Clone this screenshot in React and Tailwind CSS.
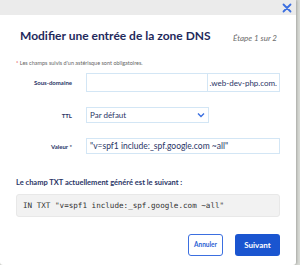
import React from 'react';

export default function App() {
    return (
        <div className="w-[300px] h-[265px] bg-[#d9dbd6] overflow-hidden font-['Lato',sans-serif] flex">
            <div className="w-[296px] flex flex-col bg-white shadow-[1px_0_3px_rgba(0,0,0,0.25)] rounded-b-[3px]">
                {/* barre du haut */}
                <div className="h-[15px] bg-[#ebebeb] flex items-center justify-end pr-[4px]">
                    <svg width="10" height="10" viewBox="0 0 10 10">
                        <path d="M1.5 1.5 L8.5 8.5 M8.5 1.5 L1.5 8.5" stroke="#3b6fe0" strokeWidth="1.8" strokeLinecap="round" />
                    </svg>
                </div>

                <div className="flex-1 px-[16px]">
                    <div className="flex items-end justify-between pt-[13px] pl-[4px] pr-[3px]">
                        <h2 className="text-[12px] font-bold text-[#1f2a5c] leading-[16px]">Modifier une entrée de la zone DNS</h2>
                        <span className="text-[8px] italic text-[#6b6b6b] leading-[12px]">Étape 1 sur 2</span>
                    </div>

                    <p className="mt-[15px] text-[5.5px] text-[#666] leading-[8px]">
                        <span className="text-[#e03030]">*</span> Les champs suivis d'un astérisque sont obligatoires.
                    </p>

                    <div className="mt-[6px] flex items-center">
                        <label className="w-[56px] text-right text-[6px] font-bold text-[#2a3566]">Sous-domaine</label>
                        <div className="ml-[14px] w-[194px] h-[19px] flex border border-[#d3e6f5]">
                            <div className="flex-1"></div>
                            <div className="border-l border-[#d3e6f5] px-[2px] flex items-center text-[8px] text-[#2a3566]">.web-dev-php.com.</div>
                        </div>
                    </div>

                    <div className="mt-[15px] flex items-center">
                        <label className="w-[56px] text-right text-[6px] font-bold text-[#2a3566]">TTL</label>
                        <div className="ml-[14px] w-[123px] h-[16px] flex items-center justify-between border border-[#d3e6f5] px-[3px] text-[8px] text-[#2a3566]">
                            <span>Par défaut</span>
                            <svg width="8" height="6" viewBox="0 0 8 6">
                                <path d="M1 1.5 L4 4.5 L7 1.5" fill="none" stroke="#3b6fe0" strokeWidth="1.4" />
                            </svg>
                        </div>
                    </div>

                    <div className="mt-[15px] flex items-center">
                        <label className="w-[56px] text-right text-[6px] font-bold text-[#2a3566]">Valeur *</label>
                        <div className="ml-[14px] w-[194px] h-[16px] flex items-center border border-[#d3e6f5] px-[3px] text-[8.5px] text-[#2a3566]">
                            "v=spf1 include:_spf.google.com ~all"
                        </div>
                    </div>

                    <p className="mt-[24px] text-[7.5px] font-bold text-[#2a3566] leading-[10px]">Le champ TXT actuellement généré est le suivant :</p>

                    <div className="mt-[6px] h-[23px] rounded-[3px] bg-[#f2f2f2] border border-[#e8e8e8] flex items-center px-[6px] font-['DejaVu_Sans_Mono',monospace] text-[7.6px] text-[#333]">
                        IN TXT "v=spf1 include:_spf.google.com ~all"
                    </div>

                    <div className="mt-[17px] flex justify-end gap-[12px]">
                        <button className="w-[35px] h-[22px] rounded-[3px] border border-[#3b6fe0] bg-white text-[6.5px] font-bold text-[#2c5fd4]">Annuler</button>
                        <button className="w-[45px] h-[22px] rounded-[3px] bg-[#1a55d0] text-[8px] font-bold text-white">Suivant</button>
                    </div>
                </div>
                <div className="h-[3px]"></div>
            </div>
        </div>
    );
}
